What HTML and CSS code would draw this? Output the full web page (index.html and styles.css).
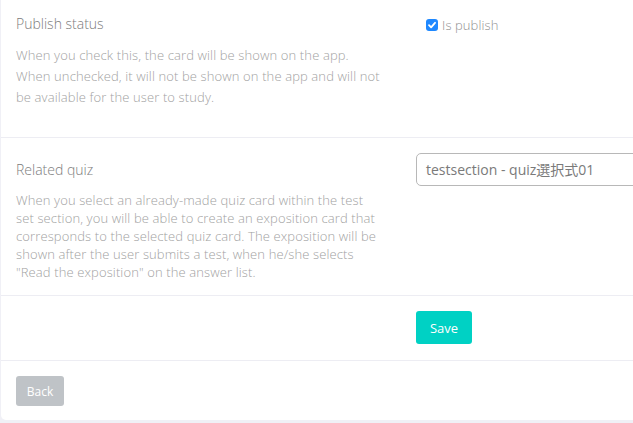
FILE: index.html
```html
<!DOCTYPE html>
<html>
<head>
<meta charset="utf-8">
<link rel="stylesheet" href="styles.css">
</head>
<body>
<div class="card">
  <div class="row row-publish">
    <div class="label-col">
      <div class="title">Publish status</div>
      <p class="desc desc-wide">When you check this, the card will be shown on the app. When unchecked, it will not be shown on the app and will not be available for the user to study.</p>
    </div>
    <div class="field-col">
      <label class="check">
        <span class="box"><svg width="10" height="10" viewBox="0 0 10 10"><path d="M2 5.2 L4.1 7.3 L8 2.8" fill="none" stroke="#fff" stroke-width="1.8" stroke-linecap="round" stroke-linejoin="round"/></svg></span>
        <span class="check-label">Is publish</span>
      </label>
    </div>
  </div>
  <div class="row row-quiz">
    <div class="label-col">
      <div class="title">Related quiz</div>
      <p class="desc desc-tight">When you select an already-made quiz card within the test set section, you will be able to create an exposition card that corresponds to the selected quiz card. The exposition will be shown after the user submits a test, when he/she selects "Read the exposition" on the answer list.</p>
    </div>
    <div class="field-col">
      <div class="select">testsection - quiz選択式01</div>
    </div>
  </div>
  <div class="row row-save">
    <div class="label-col"></div>
    <div class="field-col">
      <button class="btn btn-save">Save</button>
    </div>
  </div>
  <div class="row-back">
    <button class="btn btn-back">Back</button>
  </div>
</div>
</body>
</html>
```

FILE: styles.css
```css
html, body {
  margin: 0;
  padding: 0;
  overflow: hidden;
  background: #f0f0f6;
}
body {
  font-family: "Open Sans", "Noto Sans CJK JP", sans-serif;
  width: 633px;
  height: 423px;
}
.card {
  margin-left: 1px;
  width: 720px;
  height: 420px;
  background: #fff;
  border-radius: 0 0 0 5px;
  box-sizing: border-box;
}
.row {
  display: flex;
  border-bottom: 1px solid #ededf3;
}
.label-col {
  width: 415px;
  padding-left: 15px;
  box-sizing: border-box;
}
.field-col {
  flex: 1;
}
.title {
  font-size: 14px;
  font-weight: 300;
  line-height: 20px;
  color: #7c7c7c;
}
.desc {
  margin: 0;
  font-size: 13px;
  font-weight: 300;
  letter-spacing: 0.12px;
  color: #a2a2a2;
  width: 366px;
}
.desc-wide {
  line-height: 21px;
  margin-top: 11px;
}
.desc-tight {
  line-height: 18px;
  margin-top: 11px;
}
.row-publish {
  height: 138px;
  box-sizing: border-box;
  padding-top: 14px;
}
.row-quiz {
  height: 158px;
  box-sizing: border-box;
  padding-top: 22px;
}
.row-publish .field-col {
  padding-top: 5px;
}
.check {
  display: flex;
  align-items: center;
  margin-left: 10px;
  gap: 4px;
}
.box {
  width: 12px;
  height: 12px;
  border-radius: 3px;
  background: #1e88ff;
  display: flex;
  align-items: center;
  justify-content: center;
}
.check-label {
  font-size: 13px;
  font-weight: 300;
  letter-spacing: 0.1px;
  color: #8f8f8f;
  line-height: 12px;
}
.select {
  margin-top: -7px;
  height: 33px;
  box-sizing: border-box;
  border: 1px solid #b8b8b8;
  border-radius: 5px;
  padding-left: 9px;
  font-size: 14px;
  line-height: 31px;
  color: #7a7a7a;
}
.row-save {
  height: 65px;
  box-sizing: border-box;
  padding-top: 15px;
}
.btn {
  font-family: "Open Sans", sans-serif;
  border: none;
  border-radius: 3px;
  color: #fff;
  padding: 0;
}
.btn-save {
  width: 56px;
  height: 33px;
  background: #00d1c4;
  font-size: 13px;
}
.row-back {
  padding: 15px 0 0 15px;
}
.btn-back {
  width: 48px;
  height: 30px;
  background: #bfc3c7;
  font-size: 12px;
}
```
